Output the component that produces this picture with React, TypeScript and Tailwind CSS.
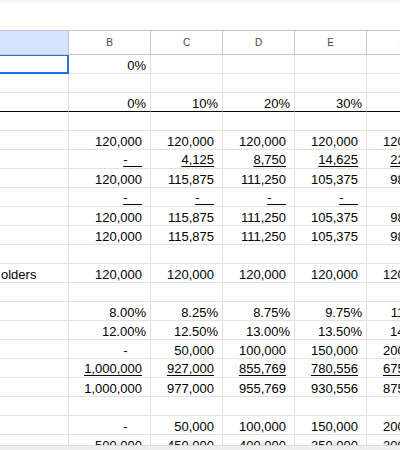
type Cell = { v: string; kind?: "num" | "pct" | "dash"; u?: boolean };
type Row = { a?: string; cells: Cell[]; thick?: boolean };

const n = (v: string, u = false): Cell => ({ v, kind: "num", u });
const p = (v: string): Cell => ({ v, kind: "pct" });
const d = (u = false): Cell => ({ v: "-", kind: "dash", u });

const net = [n("120,000"), n("115,875"), n("111,250"), n("105,375"), n("98,000")];

// Rangées visibles sous l'en-tête de colonnes — B à F, F étant coupée par le bord droit.
const rows: Row[] = [
  { cells: [p("0%")] },
  { cells: [] },
  { cells: [p("0%"), p("10%"), p("20%"), p("30%"), p("40%")], thick: true },
  { cells: [] },
  { cells: [n("120,000"), n("120,000"), n("120,000"), n("120,000"), n("120,000")] },
  { cells: [d(true), n("4,125", true), n("8,750", true), n("14,625", true), n("22,000", true)] },
  { cells: net },
  { cells: [d(true), d(true), d(true), d(true), d(true)] },
  { cells: net },
  { cells: net },
  { cells: [] },
  { a: "olders", cells: [n("120,000"), n("120,000"), n("120,000"), n("120,000"), n("120,000")] },
  { cells: [] },
  { cells: [p("8.00%"), p("8.25%"), p("8.75%"), p("9.75%"), p("11.25%")] },
  { cells: [p("12.00%"), p("12.50%"), p("13.00%"), p("13.50%"), p("14.00%")] },
  { cells: [d(), n("50,000"), n("100,000"), n("150,000"), n("200,000")] },
  {
    cells: [
      n("1,000,000", true),
      n("927,000", true),
      n("855,769", true),
      n("780,556", true),
      n("675,000", true),
    ],
  },
  { cells: [n("1,000,000"), n("977,000"), n("955,769"), n("930,556"), n("875,000")] },
  { cells: [] },
  { cells: [d(), n("50,000"), n("100,000"), n("150,000"), n("200,000")] },
  { cells: [n("500,000"), n("450,000"), n("400,000"), n("350,000"), n("300,000")] },
  { cells: [] },
];

const widths = ["w-[82px]", "w-[72px]", "w-[72px]", "w-[72px]", "w-[72px]"];
const letters = ["B", "C", "D", "E", "F"];

function Value({ cell }: { cell?: Cell }) {
  if (!cell) return null;
  if (cell.kind === "dash") {
    return (
      <span className={cell.u ? "underline underline-offset-[2px] decoration-1" : ""}>
        {"-\u00a0\u00a0\u00a0\u00a0"}
      </span>
    );
  }
  return (
    <span className={cell.u ? "underline underline-offset-[2px] decoration-1" : ""}>{cell.v}</span>
  );
}

function GridRow({ row, index }: { row: Row; index: number }) {
  const line = row.thick ? "border-b-black" : "border-b-[#e2e2e2]";
  return (
    <div className="flex h-[19px] shrink-0">
      <div
        className={`relative flex h-[19px] w-[69px] shrink-0 items-end border-b border-r border-r-[#e2e2e2] pl-[1px] leading-[15px] ${line}`}
      >
        {row.a && <span className="whitespace-nowrap">{row.a}</span>}
        {index === 0 && (
          <div className="absolute -left-[2px] -top-[1px] -right-[1px] -bottom-[1px] border-2 border-[#1a73e8]" />
        )}
      </div>
      {widths.map((w, i) => {
        const cell = row.cells[i];
        const pad = cell?.kind === "pct" ? "pr-[4px]" : "pr-[8px]";
        return (
          <div
            key={i}
            className={`flex h-[19px] ${w} shrink-0 items-end justify-end overflow-hidden whitespace-nowrap border-b border-r border-r-[#e2e2e2] leading-[15px] ${pad} ${
              cell?.u ? "pb-[1px]" : ""
            } ${line}`}
          >
            <Value cell={cell} />
          </div>
        );
      })}
    </div>
  );
}

export default function App() {
  return (
    <div
      className="flex h-[450px] w-[400px] flex-col overflow-hidden bg-white text-[13px] text-black"
      style={{ fontFamily: '"Liberation Sans", Arial, sans-serif' }}
    >
      <div className="h-[3px] shrink-0 bg-[#f7f7f7]" />
      <div className="h-[27px] shrink-0 bg-white" />
      <div className="flex h-[25px] shrink-0 border-y border-[#c7c7c7] text-[10px] text-[#444746]">
        <div className="w-[69px] shrink-0 border-r border-[#c7c7c7] bg-[#d3e3fd]" />
        {letters.map((l, i) => (
          <div
            key={l}
            className={`flex ${widths[i]} shrink-0 items-center justify-center border-r border-[#c7c7c7]`}
          >
            {l}
          </div>
        ))}
      </div>
      <div className="flex min-h-0 flex-1 flex-col overflow-hidden">
        {rows.map((r, i) => (
          <GridRow key={i} row={r} index={i} />
        ))}
      </div>
      <div className="h-[5px] shrink-0 border-t border-[#dadce0] bg-[#eeeeee]" />
    </div>
  );
}
